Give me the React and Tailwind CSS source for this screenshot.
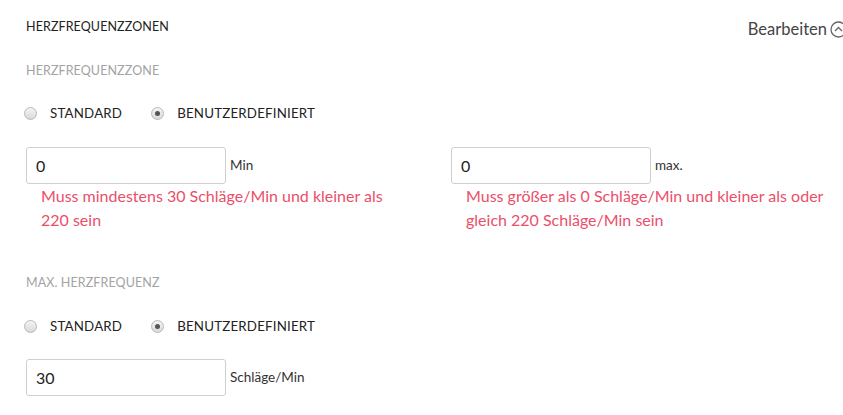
import { useState } from "react";

const font = { fontFamily: "Lato, 'Liberation Sans', sans-serif" };

const Radio = ({ checked, label }) => (
  <label className="flex items-center gap-[13px] cursor-pointer">
    <span className="w-[13px] h-[13px] rounded-full border border-[#b9b9b9] bg-gradient-to-b from-[#f4f4f4] to-[#d9d9d9] flex items-center justify-center">
      {checked && <span className="w-[5px] h-[5px] rounded-full bg-[#555]" />}
    </span>
    <span className="text-[13.3px] text-[#222] tracking-[0.2px]">{label}</span>
  </label>
);

const RadioRow = () => (
  <div className="flex items-center gap-[29px] h-[20px] -ml-[2px]">
    <Radio label="STANDARD" />
    <Radio checked label="BENUTZERDEFINIERT" />
  </div>
);

const Field = ({ value, unit, error }) => (
  <div>
    <div className="flex items-center">
      <input
        defaultValue={value}
        className="w-[200px] h-[37px] border border-[#cfcfcf] rounded-[3px] px-[9px] text-[16px] text-[#222] outline-none"
      />
      <span className="ml-[4px] text-[13.5px] text-[#333]">{unit}</span>
    </div>
    {error && (
      <p className="pl-[15px] w-[375px] text-[16px] leading-[24px] text-[#ea4f6a] mt-0">
        {error}
      </p>
    )}
  </div>
);

export default function App() {
  const [open] = useState(true);
  return (
    <div style={font} className="bg-white w-[843px] h-[415px] overflow-hidden pl-[26px]">
      <div className="flex items-center justify-between pt-[15px] h-[40px]">
        <h2 className="text-[12.5px] text-[#222] tracking-[0.1px]">HERZFREQUENZZONEN</h2>
        <button className="flex items-center gap-[3px] text-[16.5px] text-[#444] mt-[4px] -mr-[4px]">
          Bearbeiten
          <svg width="17" height="17" viewBox="0 0 17 17" fill="none" stroke="#666" strokeWidth="1.3">
            <circle cx="8.5" cy="8.5" r="7.5" />
            <path d={open ? "M5 10l3.5-3.5L12 10" : "M5 7l3.5 3.5L12 7"} />
          </svg>
        </button>
      </div>

      <h3 className="mt-[22px] text-[12.5px] text-[#a3a3a3] tracking-[0.1px]">HERZFREQUENZZONE</h3>

      <div className="mt-[23px]">
        <RadioRow />
      </div>

      <div className="mt-[23px] grid grid-cols-[425px_1fr]">
        <Field value="0" unit="Min" error="Muss mindestens 30 Schläge/Min und kleiner als 220 sein" />
        <Field value="0" unit="max." error="Muss größer als 0 Schläge/Min und kleiner als oder gleich 220 Schläge/Min sein" />
      </div>

      <h3 className="mt-[42px] text-[12.5px] text-[#a3a3a3] tracking-[0.1px]">MAX. HERZFREQUENZ</h3>

      <div className="mt-[24px]">
        <RadioRow />
      </div>

      <div className="mt-[22px]">
        <Field value="30" unit="Schläge/Min" />
      </div>
    </div>
  );
}
